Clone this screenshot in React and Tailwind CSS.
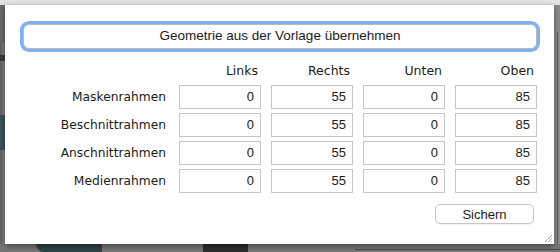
const rows = [
  { label: 'Maskenrahmen', values: ['0', '55', '0', '85'] },
  { label: 'Beschnittrahmen', values: ['0', '55', '0', '85'] },
  { label: 'Anschnittrahmen', values: ['0', '55', '0', '85'] },
  { label: 'Medienrahmen', values: ['0', '55', '0', '85'] },
];

const headers = ['Links', 'Rechts', 'Unten', 'Oben'];

function Field({ value }) {
  return (
    <div className="h-[24px] border border-[#c4c4c4] bg-white flex items-center justify-end pr-[6px] text-[13px] text-[#1a1a1a] font-['Liberation_Sans',sans-serif]">
      {value}
    </div>
  );
}

export default function App() {
  return (
    <div className="w-[560px] h-[252px] overflow-hidden flex flex-col bg-[#7c7c7c] font-['DejaVu_Sans',sans-serif]">
      <div className="h-[5px] shrink-0 bg-[#e4e4e4]" />

      <div className="flex h-[239px] shrink-0">
        {/* desktop on the left */}
        <div className="w-[5px] flex flex-col bg-gradient-to-r from-[#5e5e5e] to-[#8a8a8a]">
          <div className="h-[38px] bg-[#6a6a6a]" />
          <div className="h-[12px]" />
          <div className="h-[6px] bg-[#3a3a3a]" />
          <div className="h-[54px]" />
          <div className="h-[35px] bg-[#3b5459]" />
        </div>

        {/* sheet window */}
        <div className="relative w-[549px] bg-white shadow-[0_2px_6px_rgba(0,0,0,0.45)] z-10">
          <div className="pl-[18px] pr-[17px] pt-[19px]">
            <div className="h-[25px] rounded-[6px] ring-[3px] ring-[#80b0f4] border border-[#b9b9b9] bg-white flex items-center justify-center text-[13.5px] text-[#1a1a1a] font-['Liberation_Sans',sans-serif]">
              Geometrie aus der Vorlage übernehmen
            </div>

            <div className="mt-[14px] grid grid-cols-[146px_82px_82px_82px_82px] gap-x-[10px] gap-y-[4px]">
              <div />
              {headers.map((h) => (
                <div key={h} className="h-[17px] mb-[1px] flex items-center justify-end pr-[3px] text-[12.5px] text-[#1a1a1a]">
                  {h}
                </div>
              ))}
              {rows.map((r) => (
                <div key={r.label} className="contents">
                  <div className="h-[24px] flex items-center justify-end pr-[3px] text-[12.25px] text-[#1a1a1a]">
                    {r.label}
                  </div>
                  {r.values.map((v, i) => (
                    <Field key={i} value={v} />
                  ))}
                </div>
              ))}
            </div>

            <div className="mt-[11px] flex justify-end pr-[3px]">
              <button className="w-[99px] h-[20px] rounded-[5px] border border-[#c6c6c6] bg-white shadow-[0_1px_0_rgba(0,0,0,0.05)] text-[13px] text-[#1a1a1a] font-['Liberation_Sans',sans-serif]">
                Sichern
              </button>
            </div>
          </div>

          <svg className="absolute right-[1px] bottom-[1px]" width="10" height="10" viewBox="0 0 10 10">
            <path d="M9 2 L2 9 M9 5 L5 9 M9 8 L8 9" stroke="#a8a8a8" strokeWidth="1" />
          </svg>
        </div>

        {/* desktop on the right */}
        <div className="w-[6px] flex flex-col bg-[#8c8c8c]">
          <div className="h-[27px]" />
          <div className="flex-1 flex justify-end pr-[2px]">
            <div className="w-[1px] bg-[#5a5a5a]" />
          </div>
        </div>
      </div>

      {/* desktop below */}
      <div className="flex-1 flex bg-[#767676]">
        <div className="w-[36px]" />
        <div className="w-[66px] bg-[#2f4347] rounded-bl-[30px]" />
        <div className="w-[101px]" />
        <div className="w-[45px] bg-[#2e2e2e]" />
        <div className="w-[107px]" />
        <div className="flex-1 flex flex-col">
          <div className="h-[5px]" />
          <div className="h-[1px] bg-[#4a4a4a]" />
        </div>
      </div>
    </div>
  );
}
